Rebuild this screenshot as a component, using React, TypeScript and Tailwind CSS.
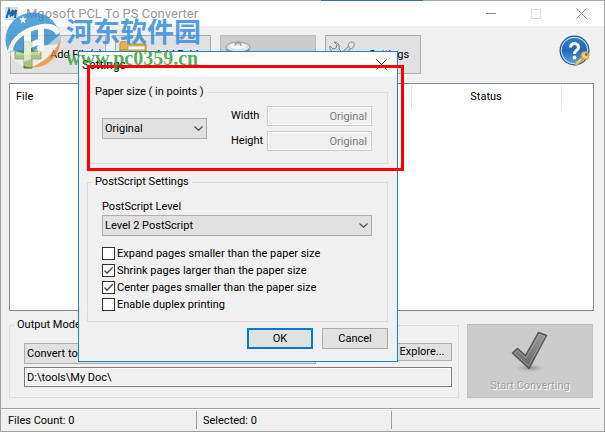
import { useState, type ReactNode } from "react";

type GroupProps = {
  title: string;
  className?: string;
  children: ReactNode;
};

function Group({ title, className = "", children }: GroupProps) {
  return (
    <fieldset className={`min-w-0 border border-[#dcdcdc] ${className}`}>
      <legend className="ml-1 px-[3px] leading-4">{title}</legend>
      {children}
    </fieldset>
  );
}

type DropdownProps = {
  id: string;
  options: string[];
  className?: string;
};

function Dropdown({ id, options, className = "" }: DropdownProps) {
  return (
    <div className={`relative ${className}`}>
      <select
        id={id}
        aria-label={options[0]}
        className="block h-[21px] w-full appearance-none border border-[#adadad] bg-[#e1e1e1] pl-[2px] pr-5 outline-none"
      >
        {options.map((option) => (
          <option key={option}>{option}</option>
        ))}
      </select>
      <svg
        viewBox="0 0 9 5"
        className="pointer-events-none absolute right-1 top-2 h-[5px] w-[9px]"
        fill="none"
        stroke="#505050"
        strokeWidth="1.2"
      >
        <path d="M.5 .5 4.5 4.3 8.5 .5" />
      </svg>
    </div>
  );
}

type CheckOptionProps = {
  label: string;
  defaultChecked?: boolean;
};

function CheckOption({ label, defaultChecked = false }: CheckOptionProps) {
  const [checked, setChecked] = useState(defaultChecked);

  return (
    <label className="relative flex h-[17px] items-center gap-[2px]">
      <input
        type="checkbox"
        checked={checked}
        onChange={(e) => setChecked(e.target.checked)}
        className="h-[13px] w-[13px] shrink-0 appearance-none border border-[#333] bg-white"
      />
      {checked && (
        <svg
          viewBox="0 0 13 13"
          className="pointer-events-none absolute left-0 top-[2px] h-[13px] w-[13px]"
          fill="none"
          stroke="#444"
          strokeWidth="1.3"
        >
          <path d="M2.5 6.5 5 9.2 10.7 3.2" />
        </svg>
      )}
      <span className="whitespace-nowrap">{label}</span>
    </label>
  );
}

function SizeField({ label }: { label: string }) {
  return (
    <label className="flex items-center">
      <span className="w-9 shrink-0">{label}</span>
      <input
        disabled
        value="Original"
        className="h-5 w-0 flex-1 border border-[#ccc] bg-[#f0f0f0] px-1 text-right text-[#7a7a7a] shadow-[inset_0_0_0_1px_#fff]"
      />
    </label>
  );
}

function PlusIcon() {
  return (
    <svg viewBox="0 0 28 28" className="h-7 w-7 shrink-0">
      <path
        d="M10 1h8v9h9v8h-9v9h-8v-9H1v-8h9z"
        fill="#6f9a2c"
        stroke="#4c6a1c"
      />
      <path d="M11 2h6v9h9v3H2v-3h9z" fill="#a3c468" opacity=".7" />
    </svg>
  );
}

function FolderIcon() {
  return (
    <svg viewBox="0 0 28 28" className="h-7 w-7 shrink-0">
      <path d="M1 2 3 0h6l2 3h16v8H1z" fill="#e3b44c" stroke="#b98a28" />
      <path d="M9 5h17v5H9z" fill="#fdfdfd" stroke="#b98a28" strokeWidth=".6" />
      <path d="M1 9h26v17H1z" fill="#f1cb6c" stroke="#b98a28" />
    </svg>
  );
}

function TrashIcon() {
  return (
    <svg viewBox="0 0 28 28" className="h-7 w-7 shrink-0">
      <path d="M4 9h20l-2 18H6z" fill="#9c9c9c" />
      <ellipse cx="14" cy="8" rx="12" ry="5" fill="#8b8b8b" />
      <ellipse cx="14" cy="6" rx="12" ry="5" fill="#e2e2e2" stroke="#999" />
      <ellipse cx="14" cy="5" rx="8" ry="3" fill="#f6f6f6" />
      <path
        d="M11 4.500c0-4 6-4 6 0"
        fill="#ddd"
        stroke="#999"
        strokeWidth="1.300"
      />
    </svg>
  );
}

function ToolsIcon() {
  return (
    <svg viewBox="0 0 28 28" className="h-7 w-7 shrink-0">
      <path d="M23 4 11 16" stroke="#8c8c8c" strokeWidth="4" />
      <path d="M23 4 11 16" stroke="#dadada" strokeWidth="2.400" />
      <path
        d="M5 1l3 3-1 3-3 1-3-3c-1 4 2 7 6 6l13 15 4-4L10 8c1-4-1-7-5-7z"
        fill="#d7d7d7"
        stroke="#828282"
      />
      <path
        d="M19 4c1-3 5-4 6-2s-1 6-4 6z"
        fill="#e3e3e3"
        stroke="#8c8c8c"
      />
      <path d="m9 12 4-2 4 3-6 8-5-1z" fill="#318bc4" />
    </svg>
  );
}

function HelpIcon() {
  return (
    <svg viewBox="0 0 32 32" className="h-8 w-8">
      <defs>
        <linearGradient id="helpFill" x1="0" y1="0" x2="0" y2="1">
          <stop offset="0" stopColor="#2f7cc2" />
          <stop offset=".5" stopColor="#2468b4" />
          <stop offset="1" stopColor="#4da5e3" />
        </linearGradient>
      </defs>
      <circle cx="15.500" cy="15.500" r="15" fill="#205a9a" />
      <circle cx="15.500" cy="15.500" r="13.700" fill="#b9dcf5" />
      <circle cx="15.500" cy="15.500" r="12.600" fill="url(#helpFill)" />
      <path
        d="M11.500 12.500c0-5.500 8.500-5 8 0-.3 3-4 3-4 6.500"
        fill="none"
        stroke="#fff"
        strokeWidth="3"
      />
      <circle cx="15.500" cy="22.500" r="1.900" fill="#fff" />
      <path
        d="m24 21-8 6.500v2.500h3l1-2 2-.5.5-2 4-2.500z"
        fill="#f3c66b"
        stroke="#bd8632"
        strokeWidth=".8"
      />
      <circle
        cx="26"
        cy="20.500"
        r="4"
        fill="#f3c66b"
        stroke="#bd8632"
        strokeWidth=".8"
      />
      <circle cx="27.300" cy="19.500" r="1.200" fill="#7a5a28" />
    </svg>
  );
}

function CheckMarkIcon() {
  return (
    <svg viewBox="0 0 38 42" className="h-[42px] w-[38px]">
      <defs>
        <radialGradient id="checkShadow">
          <stop offset="0" stopColor="#8a8a8a" />
          <stop offset="1" stopColor="#ccc" stopOpacity="0" />
        </radialGradient>
        <linearGradient id="checkFill" x1="0" y1="0" x2="0" y2="1">
          <stop offset="0" stopColor="#9b9b9b" />
          <stop offset="1" stopColor="#666" />
        </linearGradient>
      </defs>
      <ellipse cx="19" cy="37" rx="18" ry="5" fill="url(#checkShadow)" />
      <path
        d="M1.500 22 6.500 17.500 14.500 24.500 27.500 1.500 35.500 4.500 18 37.500z"
        fill="url(#checkFill)"
        stroke="#555"
        strokeWidth="1.500"
        strokeLinejoin="round"
      />
      <path
        d="M3.500 22 6.500 19.500 15 27 28.500 3.500 33.500 5.500 17.500 35z"
        fill="none"
        stroke="#aaa"
        strokeWidth=".7"
      />
    </svg>
  );
}

function AppLogo() {
  return (
    <svg viewBox="0 0 13 13" className="h-[13px] w-[13px]">
      <rect width="13" height="13" fill="#d5dce2" />
      <path
        d="M1.500 11 4 3l1.500 5L8 3l-1 6M7 9l4-6-1 8"
        fill="none"
        stroke="#1766ae"
        strokeWidth="2"
      />
    </svg>
  );
}

function Watermark() {
  return (
    <div className="pointer-events-none absolute left-1 top-3 flex items-center gap-1">
      <svg viewBox="0 0 57 57" className="h-[57px] w-[57px] opacity-75">
        <defs>
          <clipPath id="globe">
            <circle cx="28" cy="28" r="27.500" />
          </clipPath>
        </defs>
        <g clipPath="url(#globe)">
          <path d="M0 0h57v32L30 34 0 42z" fill="#2588c9" />
          <path
            d="M3 40C4 26 20 14 38 12c9-1 16 2 18 8l-5 3c-2-5-8-7-15-6C22 19 9 28 8 38z"
            fill="#fff"
          />
          <path d="M8 38 20 30v12zM25 27l7-3v13l-7 3z" fill="#2588c9" />
          <path
            d="M8 38 20 42l18-5 14-12 5-4v8C50 44 36 53 22 57 12 53 4 48 2 38z"
            fill="#fff"
            fillOpacity=".55"
          />
          <path d="M57 19C56 35 42 50 24 56h33z" fill="#f08a2c" />
          <path d="M19 22l7-4v12l7-3V16l6-3v25l-6 4V33l-7 3v11l-7 3z" fill="#fff" />
        </g>
        <path d="m18 4 1 2.500h3l-2.500 2 1 3-2.500-2-2.500 2 1-3-2.500-2h3z" fill="#fff" />
      </svg>
      <div className="flex flex-col whitespace-nowrap">
        <span className="font-['Noto_Sans_CJK_SC',sans-serif] text-[27px] font-bold leading-[34px] text-[#3d8fe0]/90">
          河东软件园
        </span>
        <span className="font-['Liberation_Serif',serif] text-xl font-bold leading-5 text-[#35a045]/85">
          www.pc0359.cn
        </span>
      </div>
    </div>
  );
}

const toolButton =
  "flex h-[39px] w-24 items-center overflow-hidden whitespace-nowrap border border-[#adadad] bg-[#e1e1e1] pl-[3px]";

function SettingsDialog() {
  return (
    <section
      role="dialog"
      aria-labelledby="dialog-title"
      className="absolute left-[77px] top-[51px] w-80 border border-[#1883d7] bg-[#f0f0f0]"
    >
      <header className="flex h-[25px] items-center justify-between bg-white pl-[3px] pr-[10px]">
        <h2 id="dialog-title" className="text-xs">
          Settings
        </h2>
        <button aria-label="Close">
          <svg viewBox="0 0 11 11" className="h-[11px] w-[11px]" stroke="#000">
            <path d="M.5.500l10 10M10.500.500l-10 10" />
          </svg>
        </button>
      </header>

      <div className="pb-3 pl-2 pr-[9px] pt-[7px]">
        <Group title="Paper size ( in points )">
          <div className="flex items-start justify-between pb-3 pl-[14px] pr-[15px] pt-[6px]">
            <Dropdown
              id="paper-size"
              options={["Original", "A4", "Letter"]}
              className="mt-3 w-[105px]"
            />
            <div className="flex w-[141px] flex-col gap-[5px]">
              <SizeField label="Width" />
              <SizeField label="Height" />
            </div>
          </div>
        </Group>

        <Group title="PostScript Settings" className="mt-[10px]">
          <div className="pb-[8px] pl-[14px] pr-[15px] pt-[9px]">
            <label htmlFor="ps-level" className="block leading-4">
              PostScript Level
            </label>
            <Dropdown
              id="ps-level"
              options={["Level 2 PostScript", "Level 3 PostScript"]}
              className="mb-[9px]"
            />
            <CheckOption label="Expand pages smaller than the paper size" />
            <CheckOption
              label="Shrink pages larger than the paper size"
              defaultChecked
            />
            <CheckOption
              label="Center pages smaller than the paper size"
              defaultChecked
            />
            <CheckOption label="Enable duplex printing" />
          </div>
        </Group>

        <div className="mt-[6px] flex justify-end gap-[9px]">
          <button className="h-[21px] w-[66px] border-2 border-[#0078d7] bg-[#e1e1e1]">
            OK
          </button>
          <button className="h-[21px] w-[66px] border border-[#adadad] bg-[#e1e1e1]">
            Cancel
          </button>
        </div>
      </div>

      {/* highlight around the paper size group */}
      <div className="pointer-events-none absolute left-2 top-[13px] h-[106px] w-[317px] border-[3px] border-[#fe0000]" />
    </section>
  );
}

export default function App() {
  return (
    <main className="relative flex min-h-screen flex-col overflow-hidden border-x border-b border-[#a0a0a0] bg-[#f0f0f0] font-[Roboto,sans-serif] text-[11px] leading-4 text-black">
      <div className="flex h-px bg-[#a6a6a6]">
        <div className="w-[53%]" />
        <div className="w-[17%] bg-[#3a6ea5]" />
      </div>

      <header className="flex h-[25px] items-center bg-white pl-1 pr-[17px]">
        <AppLogo />
        <h1 className="ml-2 flex-1 text-[13px] text-[#999]">
          Mgosoft PCL To PS Converter
        </h1>
        <div className="flex items-center gap-[35px]">
          <button aria-label="Minimize" className="h-px w-[10px] bg-[#888]" />
          <button
            aria-label="Maximize"
            className="h-[10px] w-[10px] border border-[#ddd]"
          />
          <button aria-label="Close window">
            <svg viewBox="0 0 11 11" className="h-[11px] w-[11px]" stroke="#888">
              <path d="M.5.500l10 10M10.500.500l-10 10" />
            </svg>
          </button>
        </div>
      </header>

      <nav className="flex items-start gap-[9px] px-[9px] pb-[9px] pt-[9px]">
        <button className={`${toolButton} gap-2`}>
          <PlusIcon />
          Add File(s)
        </button>
        <button className={`${toolButton} gap-2`}>
          <FolderIcon />
          Add Folder
        </button>
        <button
          aria-label="Remove"
          disabled
          className="flex h-[39px] w-24 items-center border border-[#bfbfbf] bg-[#ccc] pl-[3px]"
        >
          <TrashIcon />
        </button>
        <button className={`${toolButton} gap-3`}>
          <ToolsIcon />
          Settings
        </button>
        <button aria-label="Help" className="ml-auto mr-[4px]">
          <HelpIcon />
        </button>
      </nav>

      <div className="mx-[8px] mr-[10px] flex-1 border border-[#828790] bg-white pt-px">
        <table className="w-full table-fixed border-collapse">
          <thead>
            <tr className="h-6">
              <th className="border-r border-[#e5e5e5] pl-[6px] text-left font-normal">
                File
              </th>
              <th className="w-[150px] border-r border-[#e5e5e5] font-normal">
                Status
              </th>
              <td className="w-8" />
            </tr>
          </thead>
        </table>
      </div>

      <div className="flex items-start gap-2 pb-[10px] pl-2 pr-[11px] pt-[6px]">
        <Group title="Output Mode" className="flex-1">
          <div className="flex flex-col gap-[3px] pb-[10px] pl-[14px] pr-[6px] pt-[10px]">
            <div className="flex items-start gap-2">
              <Dropdown
                id="output-mode"
                options={["Convert to PS files"]}
                className="flex-1"
              />
              <button
                aria-label="Browse"
                className="h-[18px] w-[60px] border border-[#adadad] bg-[#e1e1e1]"
              />
              <button className="h-[18px] w-[60px] whitespace-nowrap border border-[#adadad] bg-[#e1e1e1]">
                Explore...
              </button>
            </div>
            <input
              aria-label="Output folder"
              readOnly
              value="D:\tools\My Doc\"
              className="h-5 w-full border border-[#7a7a7a] bg-[#f0f0f0] px-[2px] shadow-[inset_0_0_0_1px_#fff]"
            />
          </div>
        </Group>
        <button
          disabled
          className="mt-[7px] flex h-[74px] w-[126px] flex-col items-center justify-between border border-[#bfbfbf] bg-[#ccc] pb-[3px] pt-[6px] text-[#a0a0a0] [text-shadow:1px_1px_0_#fff]"
        >
          <CheckMarkIcon />
          Start Converting
        </button>
      </div>

      <footer className="mr-[4px] flex h-[23px] items-center border-t border-[#a0a0a0] shadow-[inset_0_1px_0_#fff]">
        <div className="h-[18px] w-[196px] border-r border-[#a0a0a0] pl-[7px] pt-[2px]">
          Files Count: 0
        </div>
        <div className="h-[18px] w-[195px] border-r border-[#a0a0a0] pl-[6px] pt-[2px]">
          Selected: 0
        </div>
      </footer>

      <SettingsDialog />
      <Watermark />
    </main>
  );
}
